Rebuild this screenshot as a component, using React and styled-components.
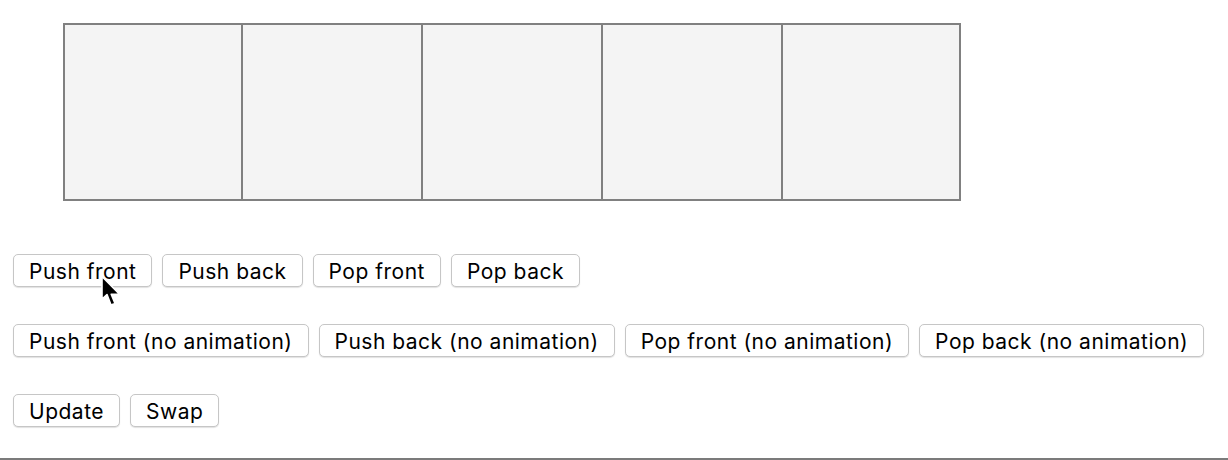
import styled, { createGlobalStyle } from "styled-components";

const GlobalStyle = createGlobalStyle`
  html, body {
    margin: 0;
    background: #fff;
  }
  body {
    font-family: Inter, "Liberation Sans", sans-serif;
  }
`;

const rows = [
  ["Push front", "Push back", "Pop front", "Pop back"],
  [
    "Push front (no animation)",
    "Push back (no animation)",
    "Pop front (no animation)",
    "Pop back (no animation)",
  ],
  ["Update", "Swap"],
];

function Pointer() {
  return (
    <Cursor width="22" height="33" viewBox="0 0 22 33">
      <path
        d="M2 1.5 L2 24 L7 19.5 L11 30 L15 28.4 L11.2 19.3 L19.5 19.3 Z"
        fill="#000"
        stroke="#fff"
        strokeWidth="1.6"
        strokeLinejoin="round"
      />
    </Cursor>
  );
}

function App() {
  return (
    <Page>
      <GlobalStyle />
      <Strip>
        {[0, 1, 2, 3, 4].map((i) => (
          <Cell key={i} />
        ))}
      </Strip>

      <Controls>
        {rows.map((row, i) => (
          <ButtonRow key={i}>
            {row.map((label) => (
              <Button key={label}>{label}</Button>
            ))}
          </ButtonRow>
        ))}
      </Controls>

      <Rule />
      <Pointer />
    </Page>
  );
}

export default App;

const Page = styled.div`
  position: relative;
  display: flex;
  flex-direction: column;
  width: 1228px;
  height: 460px;
  padding-top: 23px;
  box-sizing: border-box;
  overflow: hidden;
`;

const Strip = styled.div`
  display: grid;
  grid-template-columns: 176px repeat(3, 180px) 178px;
  width: 898px;
  height: 178px;
  margin-left: 63px;
  box-sizing: border-box;
  border: 2px solid #808080;
  background: #f4f4f4;
`;

const Cell = styled.div`
  & + & {
    border-left: 2px solid #808080;
  }
`;

const Controls = styled.div`
  display: flex;
  flex-direction: column;
  gap: 37px;
  margin-top: 53px;
  padding-left: 13px;
`;

const ButtonRow = styled.div`
  display: flex;
  gap: 10px;
`;

const Button = styled.button`
  height: 33px;
  padding: 2px 15px 0;
  border: 1px solid #c6c6c6;
  border-radius: 5px;
  background: #fff;
  box-shadow: 0 1px 1px rgba(0, 0, 0, 0.12);
  font-family: Inter, "Liberation Sans", sans-serif;
  font-size: 21px;
  letter-spacing: 0.5px;
  color: #000;
  line-height: 1;
  cursor: pointer;
`;

const Rule = styled.div`
  margin-top: auto;
  height: 2px;
  background: #7b7b7b;
`;

const Cursor = styled.svg`
  position: absolute;
  left: 100px;
  top: 275px;
`;
